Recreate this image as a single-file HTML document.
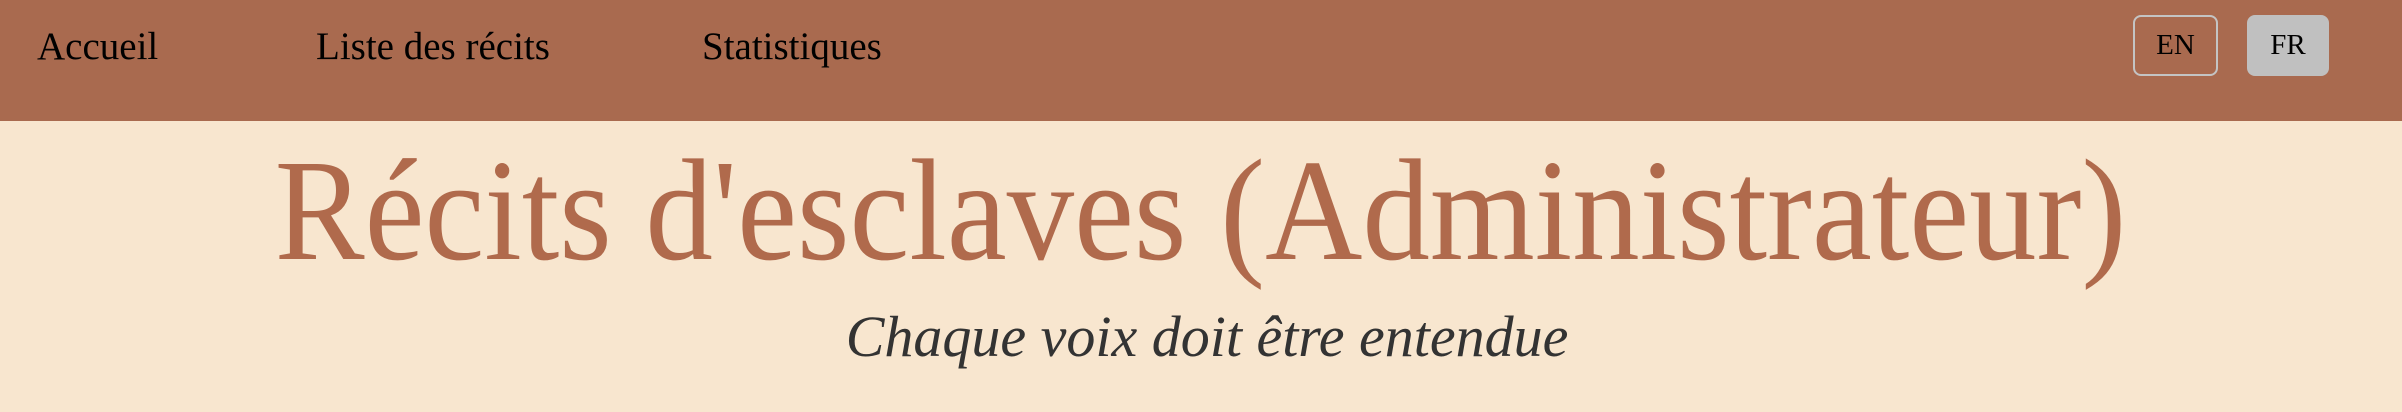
<!DOCTYPE html>
<html><head><meta charset="utf-8"><style>
html,body{margin:0;padding:0;width:2402px;height:412px;overflow:hidden;background:#f8e6cf;font-family:"Liberation Serif",serif;}
.nav{position:absolute;left:0;top:0;width:2402px;height:121px;background:#a96a4f;}
.nav a{position:absolute;top:22px;font-size:39px;color:#000;text-decoration:none;line-height:50px;}
.btn{position:absolute;top:15px;height:61px;box-sizing:border-box;border-radius:8px;font-size:29px;line-height:57px;text-align:center;color:#000;}
.t{position:absolute;left:0;width:2402px;text-align:center;white-space:nowrap;}
.t span{display:inline-block;}
</style></head><body>
<div class="nav">
<a style="left:37px">Accueil</a>
<a style="left:316px">Liste des récits</a>
<a style="left:702px">Statistiques</a>
<div class="btn" style="left:2133px;width:85px;border:2px solid #c4c4c4;">EN</div>
<div class="btn" style="left:2247px;width:82px;background:#c0c0c0;line-height:61px;">FR</div>
</div>
<div class="t" style="top:126px;font-size:145px;line-height:170px;color:#b06a4c;"><span style="transform:scaleX(0.93)">Récits d'esclaves (Administrateur)</span></div>
<div class="t" style="top:297px;left:6px;font-size:58px;line-height:80px;color:#333;font-style:italic;"><span>Chaque voix doit être entendue</span></div>
</body></html>
